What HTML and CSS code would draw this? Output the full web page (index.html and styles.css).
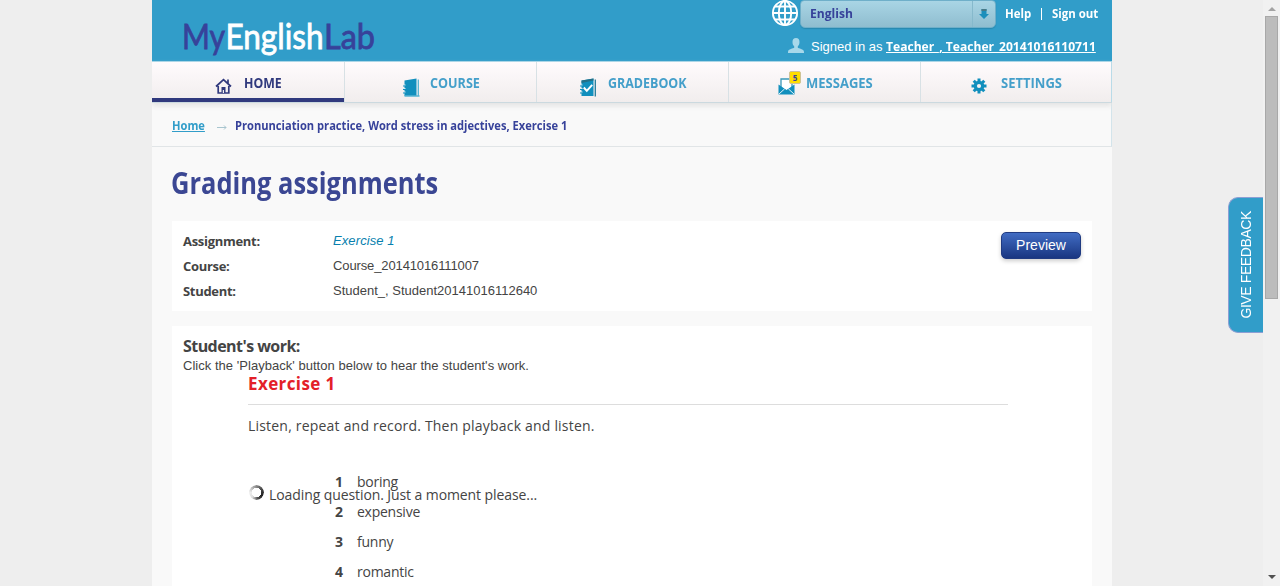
FILE: index.html
```html
<!DOCTYPE html>
<html lang="en">
<head>
<meta charset="utf-8">
<title>MyEnglishLab - Grading assignments</title>
<link rel="stylesheet" href="styles.css">
</head>
<body>
<div class="page">
  <header class="header">
    <svg class="logo" width="200" height="46" role="img" aria-label="MyEnglishLab">
      <g class="logo-text">
        <text class="logo-dark" x="0" y="31" textLength="43" lengthAdjust="spacingAndGlyphs">My</text>
        <text class="logo-light" x="43.500" y="31" textLength="98" lengthAdjust="spacingAndGlyphs">English</text>
        <text class="logo-dark" x="142" y="31" textLength="51" lengthAdjust="spacingAndGlyphs">Lab</text>
      </g>
    </svg>
    <div class="account">
      <div class="account-top">
        <svg class="globe" width="28" height="28" viewBox="0 0 28 28" fill="none" stroke="#fff" stroke-width="1.900"><circle cx="14" cy="13" r="12.100"/><ellipse cx="14" cy="13" rx="6.200" ry="12"/><path d="M14 1v24M2 13h24M4 6.500h20M4 19.500h20"/></svg>
        <div class="language"><span class="language-name"><span class="pt">English</span></span><span class="language-arrow"><svg width="12" height="12" viewBox="0 0 12 12"><path d="M3.500 1h5v5H11l-5 5-5-5h2.500z" fill="#1c8fbb"/><path d="M3.500 1h5v2h-5z" fill="#477987"/></svg></span></div>
        <a class="help"><span class="pt">Help</span></a><span class="bar"></span><a class="signout"><span class="pt">Sign out</span></a>
      </div>
      <div class="account-user">
        <svg class="person" width="16" height="16" viewBox="0 0 16 16" fill="#a7d8ea"><path d="M8 0c2.300 0 3.500 1.600 3.500 4 0 2-.7 3.600-1.700 4.300v1.500c.5.900 6.200.9 6.200 4.200v1H0v-1c0-3.300 5.700-3.300 6.200-4.200V8.300C5.200 7.600 4.500 6 4.500 4c0-2.400 1.200-4 3.500-4z"/></svg>
        <span class="signed">Signed in as</span><span class="username"><span class="pt">Teacher_, Teacher_20141016110711</span></span>
      </div>
    </div>
  </header>
  <nav class="nav">
    <a class="tab tab-active tab-home"><svg class="icon" width="17" height="16" viewBox="0 0 17 16"><path d="M1 8.500 8.500 1.700 16 8.500M13 5.500V1.500M3.200 8v7h10.600V8" fill="none" stroke="#30397d" stroke-width="1.700"/><path d="M6.500 9h4v6h-4z" fill="#30397d"/><path d="M7.800 12h1.200v3H7.800z" fill="#f3f0f1"/></svg><span class="pt">HOME</span></a>
    <a class="tab tab-course"><svg class="icon" width="17" height="19" viewBox="0 0 17 19"><path d="M1.500 2.500 13.500.5V18h-12z" fill="#118fbd"/><path d="M15.300 1.500V18.500M1.500 18h15" stroke="#55b4d2" stroke-width="1.300"/><path d="M0 7h2.500M0 10.500h2.500M0 14h2.500" stroke="#d8edf4"/><path d="M0 8h2M0 11.500h2M0 15h2" stroke="#118fbd"/></svg><span class="pt">COURSE</span></a>
    <a class="tab tab-grade"><svg class="icon" width="17" height="19" viewBox="0 0 17 19"><path d="M1.500 2.500 13.500.5V18h-12z" fill="#118fbd"/><path d="M1.500 2.500 13.500.5v2L1.500 5z" fill="#247087"/><path d="M15.300 1.500V18.500" stroke="#247b99" stroke-width="1.300"/><path d="M0 7h2.500M0 10.500h2.500M0 14h2.500" stroke="#d8edf4"/><path d="M0 8h2M0 11.500h2M0 15h2" stroke="#118fbd"/><path d="m3.800 9.500 3 3.300 5.400-6" fill="none" stroke="#fff" stroke-width="2"/></svg><span class="pt">GRADEBOOK</span></a>
    <a class="tab tab-messages"><svg class="icon" width="17" height="17" viewBox="0 0 17 17"><path d="M3 10V1h11v9l-5.500 3z" fill="#fff" stroke="#3999b9" stroke-width="1.300"/><path d="M.5 6.500 8.500 12l8-5.500v10H.5z" fill="#118fbd"/><path d="m.8 16.200 5.800-5.300M16.200 16.200l-5.800-5.300" stroke="#fff" stroke-width=".9"/></svg><span class="badge">5</span><span class="pt">MESSAGES</span></a>
    <a class="tab tab-settings"><svg class="icon" width="16" height="16" viewBox="0 0 16 16"><g stroke="#118fbd" stroke-width="3"><path d="M8 .5v15M.5 8h15M2.700 2.700l10.600 10.600M13.300 2.700 2.700 13.300"/></g><circle cx="8" cy="8" r="5.300" fill="#118fbd"/><circle cx="8" cy="8" r="2.100" fill="#f5f2f3"/></svg><span class="pt">SETTINGS</span></a>
  </nav>
  <div class="breadcrumb"><a class="crumb-home"><span class="pt">Home</span></a><svg class="crumb-arrow" width="10" height="7" viewBox="0 0 10 7"><path d="M0 3.500h9M7 1.500l2 2-2 2" fill="none" stroke="#a8c5cf"/></svg><span class="pt crumb-text">Pronunciation practice, Word stress in adjectives, Exercise 1</span></div>
  <main class="content">
    <h1 class="title"><span class="pt">Grading assignments</span></h1>
    <section class="panel details">
      <dl class="facts">
        <dt>Assignment:</dt><dd class="assignment">Exercise 1</dd>
        <dt>Course:</dt><dd class="course">Course_20141016111007</dd>
        <dt>Student:</dt><dd>Student_, Student20141016112640</dd>
      </dl>
      <button class="preview">Preview</button>
    </section>
    <section class="panel work">
      <h2 class="work-title">Student's work:</h2>
      <p class="work-hint">Click the 'Playback' button below to hear the student's work.</p>
      <div class="exercise">
        <h3 class="exercise-title">Exercise 1</h3>
        <p class="rubric">Listen, repeat and record. Then playback and listen.</p>
        <ol class="words">
          <li><b>1</b><span>boring</span></li>
          <li><b>2</b><span>expensive</span></li>
          <li><b>3</b><span>funny</span></li>
          <li><b>4</b><span>romantic</span></li>
        </ol>
        <div class="loading"><span class="spinner"></span><span class="loading-text">Loading question. Just a moment please...</span></div>
      </div>
    </section>
  </main>
</div>
<a class="feedback"><span>GIVE FEEDBACK</span></a>
<div class="scrollbar"><i class="up"></i><i class="thumb"></i><i class="down"></i></div>
</body>
</html>
```
FILE: styles.css
```css
* { box-sizing: border-box; }
html, body { height: 586px; overflow: hidden; }
body { margin: 0; background: #eee; font: 13px "Liberation Sans", sans-serif; color: #444; position: relative; }
h1, h2, h3, p, dl, dd, ol { margin: 0; padding: 0; }
.page { width: 960px; height: 586px; margin-left: 152px; background: #f9f9f9; overflow: hidden; }
.pt { display: inline-block; font-family: "Open Sans", "Noto Sans", sans-serif; font-weight: 700; transform-origin: left center; white-space: nowrap; }

.header { height: 62px; background: #319dc9; border-bottom: 1px solid #a7d5e7; display: flex; justify-content: space-between; }
.logo { margin: 18px 0 -3px 30px; overflow: visible; }
.logo-text { font: 400 34px Lato, sans-serif; stroke-width: .8px; }
.logo-dark { fill: #37429a; stroke: #37429a; }
.logo-light { fill: #fff; stroke: #fff; }
.account { width: 342px; color: #fff; }
.account-top { display: flex; height: 36px; }
.globe { flex: none; margin-left: 1px; }
.language { display: flex; flex: none; width: 196px; height: 28px; margin-left: 1px; background: linear-gradient(#a9d5e5, #8fbdcf); border: 1px solid #6fafc9; border-radius: 4px 4px 5px 5px; box-shadow: 0 1px 1px #2889ae; color: #37429a; }
.language-name { flex: 1; padding-left: 9px; line-height: 25px; }
.language-arrow { width: 23px; border-left: 1px solid #86b9cc; padding: 7px 0 0 5px; }
.account-top .pt { font-size: 13px; transform: scaleX(.93); }
.account-top .help .pt, .account-top .signout .pt { transform: scaleX(.88); }
.help { width: 36px; margin-left: 9px; line-height: 26px; }
.bar { width: 1px; height: 12px; background: #fff; margin-top: 8px; flex: none; }
.signout { margin-left: 10px; line-height: 26px; white-space: nowrap; }
.account-user { display: flex; padding-left: 18px; line-height: 21px; }
.person { margin-top: 2px; flex: none; }
.signed { width: 76px; margin-left: 7px; white-space: nowrap; }
.username .pt { font-size: 13px; text-decoration: underline; transform: scaleX(.93); margin-left: 1px; }

.nav { display: flex; height: 41px; border-bottom: 1px solid #cbd9df; box-shadow: 0 3px 5px #e4e4e4; position: relative; background: linear-gradient(#fffbfd, #f1eded); }
.tab { width: 192px; height: 40px; border-left: 1px solid #d8e1e5; display: flex; position: relative; color: #449fca; }
.tab:last-child { border-right: 1px solid #b9dbe8; }
.tab-active { color: #30397d; border-bottom: 4px solid #30397d; border-left: 0; }
.tab .icon { margin-top: 16px; flex: none; }
.tab .pt { font-size: 14px; line-height: 20px; margin-top: 11px; transform: scaleX(.9); }
.tab-home { padding-left: 63px; }
.tab-home .pt { margin-left: 12px; transform: scaleX(.88); }
.tab-course { padding-left: 58px; }
.tab-course .pt { margin-left: 10px; }
.tab-grade { padding-left: 43px; }
.tab-grade .pt { margin-left: 11px; transform: scaleX(.89); }
.tab-messages { padding-left: 49px; }
.tab-messages .pt { margin-left: 11px; transform: scaleX(.93); }
.tab-settings { padding-left: 50px; }
.tab-settings .pt { margin-left: 14px; transform: scaleX(.93); }
.badge { position: absolute; left: 60px; top: 9px; width: 12px; height: 13px; background: #fd0; border: 1px solid #cfc396; border-radius: 2px; font: 700 8px/11px "Open Sans", sans-serif; color: #37429a; text-align: center; }

.breadcrumb { height: 44px; border-bottom: 1px solid #e1e5e7; border-right: 1px solid #d3e4eb; padding: 12px 0 0 20px; display: flex; color: #37429a; line-height: 20px; }
.breadcrumb .pt { font-size: 13px; transform: scaleX(.856); }
.crumb-home { width: 45px; color: #319dc9; }
.crumb-home .pt { text-decoration: underline; }
.crumb-arrow { margin: 9px 8px 0 0; }

.content { padding: 14px 20px 0; }
.title { height: 60px; color: #3b4793; line-height: 44px; }
.title .pt { font-size: 30px; transform: scaleX(.849); margin-left: -1px; }
.panel { background: #fff; padding-left: 11px; }
.details { height: 90px; display: flex; justify-content: space-between; }
.facts { display: grid; grid-template-columns: 150px 300px; grid-auto-rows: 25px; line-height: 25px; padding-top: 7px; }
.facts dt { font: 700 13px/27px "Open Sans", sans-serif; letter-spacing: -.3px; }
.assignment { color: #087fae; font-style: italic; letter-spacing: .1px; }
.course { letter-spacing: -.12px; }
.preview { width: 80px; height: 27px; margin: 11px 11px 0 0; border: 1px solid #203b82; border-radius: 5px; background: linear-gradient(#416cc3, #193681); color: #fff; font: 14px/23px "Liberation Sans", sans-serif; box-shadow: 0 2px 4px #ccc; padding: 0 0 1px; }
.work { margin-top: 15px; height: 300px; }
.work-title { font: 700 16px/20px "Open Sans", sans-serif; letter-spacing: -.55px; padding-top: 10px; }
.work-hint { line-height: 18px; height: 18px; padding-top: 1px; letter-spacing: .03px; }
.exercise { position: relative; margin-left: 65px; width: 760px; }
.exercise-title { height: 31px; font: 700 17px/19px "Open Sans", sans-serif; letter-spacing: .4px; color: #e32028; border-bottom: 1px solid #ddd; }
.rubric { font: 14px/20px "Open Sans", sans-serif; letter-spacing: .2px; padding-top: 11px; }
.words { list-style: none; padding: 31px 0 0 87px; font: 14px/30px "Open Sans", sans-serif; letter-spacing: -.25px; }
.words li { display: flex; height: 30px; }
.words b { width: 22px; }
.loading { position: absolute; left: 0; top: 111px; display: flex; font: 14px/20px "Open Sans", sans-serif; letter-spacing: -.09px; }
.spinner { width: 15px; height: 15px; margin: 0 5px 0 1px; border-radius: 50%; background: conic-gradient(#888, #444 60deg, #222 120deg, #555 170deg, #ddd 220deg, #eee 270deg, #888); -webkit-mask: radial-gradient(circle, transparent 4.500px, #000 5px); mask: radial-gradient(circle, transparent 4.500px, #000 5px); }

.feedback { position: absolute; left: 1228px; top: 197px; width: 35px; height: 136px; background: #319dc9; border: 1px solid #8c9fd4; border-right: 0; border-radius: 10px 0 0 10px; color: #fff; display: flex; align-items: center; justify-content: center; }
.feedback span { writing-mode: vertical-rl; transform: rotate(180deg); font-size: 14px; letter-spacing: -.4px; white-space: nowrap; }
.scrollbar { position: absolute; right: 0; top: 0; width: 17px; height: 586px; background: #f1f1f1; display: flex; flex-direction: column; align-items: center; }
.up { border: 4px solid transparent; border-top: 0; border-bottom: 4px solid #a3a3a3; margin-top: 7px; }
.thumb { width: 13px; height: 283px; background: #bcbcbc; border: 1px solid #a8a8a8; margin-top: 5px; }
.down { border: 4px solid transparent; border-bottom: 0; border-top: 4px solid #505050; margin-top: auto; margin-bottom: 7px; }
```
